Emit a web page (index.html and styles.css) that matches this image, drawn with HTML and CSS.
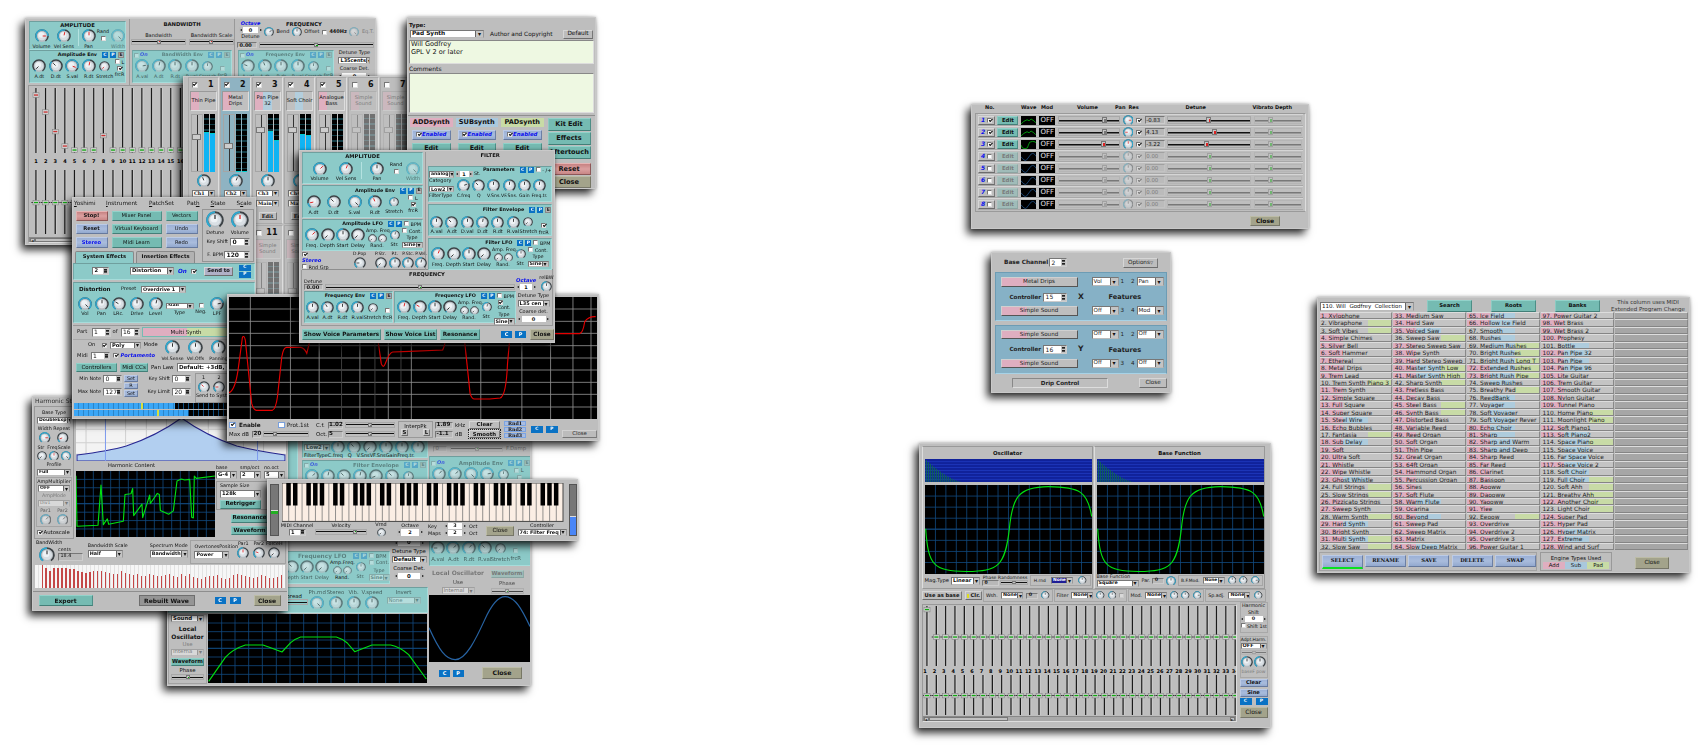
FILE: index.html
```html
<!DOCTYPE html>
<html lang="en">
<head>
<meta charset="utf-8">
<title>Yoshimi</title>
<link rel="stylesheet" href="styles.css">
</head>
<body>
<main class="desktop">

<!-- Part parameters with harmonic sliders -->
<section class="win subsynth">
  <div class="sub-top">
    <div class="sub-amp">
      <div class="teal sub-a1"><b class="h">AMPLITUDE</b>
        <div class="g"><x-k a="90" p="r" t="Volume"></x-k><x-k a="10" p="r" t="Vel Sens"></x-k><i class="vline"></i><x-k a="0" p="r" t="Pan"></x-k><span class="stack">Rand<i class="chk"></i></span><x-k a="135" off t="Width"></x-k></div>
      </div>
      <div class="teal sub-env"><div class="hd"><b>Amplitude Env</b><i class="cp">C</i><i class="cp">P</i><i class="cp e">E</i></div>
        <div class="g"><x-k a="-135" t="A.dt"></x-k><x-k a="-45" t="D.dt"></x-k><x-k a="110" p="r" t="S.val"></x-k><x-k a="10" p="r" t="R.dt"></x-k><x-k class="sm" a="-135" p="r" t="Stretch"></x-k><span class="stack end"><span><i class="chk"></i> L</span><i class="chk on"></i>frcR</span></div>
      </div>
    </div>
    <div class="sub-bw"><b class="h">BANDWIDTH</b>
      <div class="bw-sl"><span>Bandwidth<x-s v="50" c="red"></x-s></span><span>Bandwidth Scale<x-s v="48" c="red"></x-s></span></div>
      <div class="teal sub-env dis"><div class="hd"><span class="on"><i class="chk"></i>On</span><b>BandWidth Env</b><i class="cp">C</i><i class="cp">P</i><i class="cp e">E</i></div>
        <div class="g"><x-k a="80" t="A.val"></x-k><x-k a="10" t="A.dt"></x-k><x-k a="0" t="R.dt"></x-k><x-k a="0" t="R.val"></x-k><x-k class="sm" a="0" t="Stretch"></x-k><span class="stack end low"><i class="chk"></i>frcR</span></div>
      </div>
    </div>
    <div class="sub-fr">
      <div class="fr1"><span class="oct"><em>Octave</em><span class="lr">0</span><span>Detune</span></span><span class="frr"><b>FREQUENCY</b><span class="frk"><x-k class="sm" a="60"></x-k>Bend<x-k class="sm" a="0"></x-k>Offset<i class="chk"></i><b>440Hz</b><x-k class="sm" off a="135"></x-k><span class="faint">Eq.T.</span></span></span></div>
      <div class="fr2"><b class="inp">0.00</b><x-s v="50" c="green"></x-s></div>
      <div class="fr3"><div class="teal sub-env dis"><div class="hd"><span class="on"><i class="chk"></i>On</span><b>Frequency Env</b><i class="cp">C</i><i class="cp">P</i><i class="cp e">E</i></div>
        <div class="g"><x-k a="-70" t="A.val"></x-k><x-k a="-20" t="A.dt"></x-k><x-k a="0" t="R.dt"></x-k><x-k a="0" t="R.val"></x-k><x-k class="sm" a="0" t="Stretch"></x-k><span class="stack end low"><i class="chk"></i>frcR</span></div>
      </div><div class="det"><span>Detune Type</span><b class="sel">L35cents</b><span>Coarse Det.</span><span class="lr">0</span></div></div>
    </div>
  </div>
  <x-harm n="16" sub></x-harm>
</section>

<!-- Mixer -->
<section class="win mixer"><x-mixer></x-mixer></section>

<!-- Instrument edit -->
<section class="win kit">
  <div class="kit-a"><b>Type:</b>
    <div class="kit-t"><b class="sel">Pad Synth</b><span>Author and Copyright</span><span class="btn">Default</span></div>
    <div class="area a1">Will Godfrey<br>GPL V 2 or later</div>
    <span class="cm">Comments</span>
    <div class="area a2"></div>
  </div>
  <div class="kit-b">
    <div class="eng"><b class="chip pink">ADDsynth</b><em class="btn blue"><i class="chk on"></i> Enabled</em><b class="btn tl">Edit</b></div>
    <div class="eng"><b class="chip sky">SUBsynth</b><em class="btn blue"><i class="chk on"></i> Enabled</em><b class="btn tl">Edit</b></div>
    <div class="eng"><b class="chip lime">PADsynth</b><em class="btn blue"><i class="chk on"></i> Enabled</em><b class="btn tl">Edit</b></div>
    <div class="kit-c"><b class="btn tl">Kit Edit</b><b class="btn tl">Effects</b><b class="btn tl">Aftertouch</b><b class="btn red">Reset</b><b class="btn cl">Close</b></div>
  </div>
</section>

<!-- Voice parameters -->
<section class="win voice">
  <div class="vo-l">
    <div class="vo-f1 dis"><div class="teal vo-a"></div>
      <div class="vo-f"><div class="teal vp"><b class="sel">Low2</b><div class="ks"><x-k a="0"></x-k><x-k a="-45"></x-k><x-k a="-135"></x-k><x-k a="0"></x-k><x-k a="0"></x-k><x-k a="0"></x-k></div><p>FilterTypeC.freq&nbsp;&nbsp; Q&nbsp;&nbsp; V.SnsVF.SnsGainFreq.tr.</p></div>
      <div class="teal ve"><div class="hd"><span class="on"><i class="chk"></i>On</span><b>Filter Envelope</b><i class="cp">C</i><i class="cp">P</i><i class="cp e">E</i></div><div class="ks"><x-k a="50"></x-k><x-k a="10"></x-k><x-k a="-45"></x-k><x-k a="10"></x-k><x-k a="-110"></x-k><x-k a="-45"></x-k><x-k class="sm" a="0"></x-k></div></div></div>
    </div>
    <div class="vo-f2"><div class="teal vl dis"><div class="hd"><b>Frequency LFO</b><i class="cp">C</i><i class="cp">P</i><span><i class="chk"></i> BPM<br><i class="chk"></i> Cont.</span></div><div class="ks"><x-k a="-45" t="Depth"></x-k><x-k a="-135" t="Start"></x-k><x-k a="-135" t="Delay"></x-k><span class="rand">Amp.Freq.<span><x-k class="sm" a="-135"></x-k><x-k class="sm" a="-135"></x-k></span>Rand.</span><x-k class="sm" a="0" t="Str."></x-k><span class="stack vty">Type<b class="sel">Sine</b></span></div></div>
      <div class="vt"><span class="lr">0</span><span>Detune Type</span><b class="sel">Default</b><span>Coarse Det.</span><span class="lr">0</span></div></div>
    <div class="teal unis dis"><span class="spread">Spread<x-s v="0"></x-s></span><x-k up a="135" t="Ph.rnd"></x-k><x-k up a="0" t="Stereo"></x-k><x-k up a="0" t="Vib."></x-k><x-k up a="0" t="V.speed"></x-k><span class="stack">Invert<span class="sel">None</span></span></div>
    <div class="vo-b"><div class="vo-lo"><b class="sel">Sound</b><b class="lo">Local<br>Oscillator</b><span class="faint">Use</span><span class="sel faint">Interna</span><b class="btn tl">Waveform</b><span>Phase</span><x-s v="50" c="green"></x-s></div>
      <svg class="scope" viewBox="0 0 657 207" preserveAspectRatio="none"><path class="grid" d="M0 27H657M0 53H657M0 78H657M0 103H657M0 103H657M0 129H657M0 155H657M0 181H657M41 0V207M81 0V207M122 0V207M163 0V207M205 0V207M246 0V207M287 0V207M328 0V207M369 0V207M410 0V207M451 0V207M492 0V207M533 0V207M574 0V207M615 0V207"/><path class="green" d="M2 202L52 130Q75 105 112 93H165L190 102L222 114L248 86Q262 74 278 69H385Q405 75 418 87L440 113L492 93H548Q575 98 602 122L655 195"/></svg></div>
  </div>
  <div class="vo-r">
    <div class="vr0"><span class="inp">0</span><x-s v="50" c="green"></x-s><span>V.Sns</span><span class="inp">0</span><x-s v="50" c="green"></x-s><span>F.Damp</span></div>
    <div class="teal vr1 dis"><div class="hd"><span class="on"><i class="chk"></i>On</span><b>Amplitude Env</b><i class="cp">C</i><i class="cp">P</i><i class="cp e">E</i></div><div class="ks"><x-k a="40"></x-k><x-k a="50"></x-k><x-k a="135"></x-k><x-k a="80"></x-k><x-k class="sm" a="0"></x-k><span class="stack"><span><i class="chk"></i> L</span><i class="chk"></i></span></div></div>
    <div class="teal vr2 dis"><div class="ks"><x-k a="-90" t="A.val"></x-k><x-k a="50" t="A.dt"></x-k><x-k a="40" t="R.dt"></x-k><x-k a="-45" t="R.val"></x-k><x-k class="sm" a="-135" t="Stretch"></x-k><span class="stack end low"><i class="chk"></i>frcR</span></div></div>
    <div class="vr3 dis"><span><b>Local Oscillator</b><span>Use</span><span class="sel">Internal</span></span><span><b class="btn tl">Waveform</b><span>Phase</span><x-s v="50" c="green"></x-s></span></div>
    <svg class="scope" viewBox="0 0 300 200" preserveAspectRatio="none"><path class="wave" d="M0 98C30 165 50 193 78 193C110 193 140 130 165 75C185 30 205 5 226 5C255 5 275 40 300 94"/></svg>
    <div class="vr4"><i class="cp">C</i><i class="cp">P</i><b class="btn cl">Close</b></div>
  </div>
</section>

<!-- Harmonic structure -->
<section class="win pad">
  <div class="pad-title">Harmonic Structure</div>
  <div class="pad-top">
    <div class="pad-l">
      <span>Base Type</span><b class="sel">DoubleExp</b><span class="gap">Width Repeat</span><div class="ks2"><x-k a="90" p="r"></x-k><x-k a="-110" p="r"></x-k></div>
      <span>Str&nbsp; FreqScale</span><div class="ks3"><x-k a="-135"></x-k><x-k a="0" p="r"></x-k><x-k a="135"></x-k></div><span>Profile</span><b class="sel">Full</b>
      <div class="pad-am"><span>AmpMultiplier</span><b class="sel">OFF</b><span class="faint">AmpMode</span><span class="sel faint">Div1</span><div class="ks2 dis"><x-k a="40" t="Par1" up></x-k><x-k a="40" t="Par2" up></x-k></div></div>
      <span class="asc"><i class="chk on"></i>Autoscale</span>
    </div>
    <div class="pad-r">
      <svg class="prof" viewBox="0 0 627 165" preserveAspectRatio="none"><path class="bg" d="M0 0H627V165H0Z"/><path class="gl" d="M30 0V165M88 0V165M148 0V165M210 0V165M270 0V165M332 0V165M395 0V165M458 0V165M500 0V165M560 0V165M0 70H627M0 110H627M0 145H627"/><path class="fill" d="M3 165V147Q100 135 150 120Q240 90 315 36Q390 90 480 120Q540 135 624 147V165Z"/><path class="mk" d="M88 0V165M542 0V165"/></svg>
      <div class="pad-mid">
        <div class="pad-hc"><span>Harmonic Content</span>
          <svg class="scope" viewBox="0 0 417 197" preserveAspectRatio="none"><path class="grid" d="M0 25H417M0 50H417M0 75H417M0 97H417M0 98H417M0 123H417M0 148H417M0 173H417M26 0V197M52 0V197M78 0V197M104 0V197M130 0V197M157 0V197M183 0V197M209 0V197M235 0V197M261 0V197M287 0V197M313 0V197M339 0V197M365 0V197M391 0V197"/><path class="green" d="M0 14L3 165L66 162L75 42L82 160L94 143L98 159L142 150L147 70L165 68L170 52L173 133L198 99L200 139L221 72L223 97L244 67L250 70L253 118L278 129L292 119L303 30L316 24L326 27L341 25L347 138L352 140L355 15L361 22L417 15"/></svg></div>
        <div class="pad-c"><div class="sel3"><span>base<b class="sel">G-4</b></span><span>smp/oct<b class="sel">2</b></span><span>no.oct<b class="sel">5</b></span></div>
          <div class="samp"><span>Sample Size</span><b class="sel">128k</b><b class="btn tl">Retrigger</b></div>
          <b class="btn tl rw">Resonance</b><b class="btn tl rw">Waveform</b></div>
      </div>
    </div>
  </div>
  <div class="pad-bw"><span class="bwk">BandWidth<x-k a="0"></x-k></span><span class="cents">cents<span class="inp">18.4</span></span><span class="fld">Bandwidth Scale<b class="sel">Half</b></span><span class="fld sp">Spectrum Mode<b class="sel">Bandwidth</b></span><div class="over"><span class="fld">OvertonesPosition<b class="sel">Power</b></span><x-k up a="0" p="r" t="Par1"></x-k><x-k up a="-70" p="r" t="Par2"></x-k><x-k up a="-135" t="ForceH"></x-k></div></div>
  <x-bars></x-bars>
  <div class="pad-foot"><b class="btn tl">Export</b><b class="btn dk">Rebuilt Wave</b><i class="cp">C</i><i class="cp">P</i><b class="btn cl">Close</b></div>
</section>

<!-- Main window -->
<section class="win mainw">
  <nav class="menu"><span><u>Y</u>oshimi</span><span><u>I</u>nstrument</span><span><u>P</u>atchSet</span><span>Pat<u>h</u></span><span><u>S</u>tate</span><span>S<u>c</u>ale</span></nav>
  <div class="mw-top">
    <div class="mw-left">
      <div class="btn9"><b class="btn red">Stop!</b><span class="btn tl">Mixer Panel</span><span class="btn tl">Vectors</span><b class="btn blue">Reset</b><span class="btn tl">Virtual Keyboard</span><span class="btn blue">Undo</span><b class="btn blue link">Stereo</b><span class="btn tl">Midi Learn</span><span class="btn blue">Redo</span></div>
      <div class="tabs"><b class="tab teal">System Effects</b><b class="tab">Insertion Effects</b></div>
    </div>
    <div class="mw-vol"><div class="ks"><x-k a="0" t="Detune"></x-k><x-k a="0" p="r" t="Volume"></x-k></div><div class="rw1"><span>Key Shift</span><b class="spin">0</b></div><div class="rw2"><span>F. BPM</span><b class="spin">120</b></div></div>
  </div>
  <div class="teal fx1"><b class="spin">2</b><b class="sel">Distortion</b><em>On</em><i class="chk on"></i><b class="btn lil">Send to</b><span class="cps"><i class="cp">C</i><i class="cp">P</i></span></div>
  <div class="teal fx2"><div class="fx2h"><b>Distortion</b><span>Preset</span><b class="sel">Overdrive 1</b></div>
    <div class="g"><x-k a="135" t="Vol"></x-k><x-k a="0" t="Pan"></x-k><x-k a="-60" t="LRc."></x-k><x-k a="0" t="Drive"></x-k><x-k a="10" t="Level"></x-k><span class="stack low"><b class="sel">Atan</b>Type</span><span class="stack low"><i class="chk"></i>Neg.</span><x-k a="80" t="LPF"></x-k></div></div>
  <div class="part1"><span>Part</span><span class="spin">1</span><span>of</span><span class="spin">16</span><span class="name">Multi Synth</span></div>
  <div class="part2"><div class="p2l"><div class="p2a"><span>On</span><i class="chk on"></i><b class="sel">Poly</b><span>Mode</span></div><div class="p2b"><span>Midi</span><span class="spin">1</span><i class="chk on"></i><em>Portamento</em></div></div><div class="ks"><x-k a="0" t="Vel.Sense"></x-k><x-k a="0" t="Vel.Offs"></x-k><x-k a="0" t="Panning"></x-k></div></div>
  <div class="part3"><span class="btn tl">Controllers</span><span class="btn tl">Midi CCs</span><span>Pan Law</span><b class="sel">Default: +3dB, Centre</b></div>
  <div class="part4"><div class="p4a"><span>Min Note</span><span class="spin">0</span><span>Max Note</span><span class="spin">127</span></div><div class="p4b"><span class="btn blue">Set</span><span class="btn blue">R</span><span class="btn blue">Set</span></div><div class="p4a"><span>Key Shift</span><span class="spin">0</span><span>Key Limit</span><span class="spin">20</span></div><div class="p4c"><div class="ks"><x-k up a="-45" p="r" t="1"></x-k><x-k up a="-90" p="r" t="2"></x-k><x-k up a="-45" p="r" t="3"></x-k></div><span>Send to System</span></div></div>
  <div class="vu v1"><i></i></div><div class="vu v2"><i></i></div>
</section>

<!-- Resonance -->
<section class="win reso">
  <svg class="rg" viewBox="0 0 1102 366" preserveAspectRatio="none"><path d="M0 0H1102V366H0Z"/><path class="wl" d="M0 36H1102M0 73H1102M0 109H1102M0 146H1102M0 183H1102M0 219H1102M0 256H1102M0 292H1102M0 330H1102M64 0V366M184 0V366M270 0V366M392 0V366M477 0V366M546 0V366M754 0V366M877 0V366M963 0V366M1030 0V366M1084 0V366"/><path class="wl dim" d="M337 0V366M437 0V366M515 0V366"/><path class="rd" d="M0 287Q18 280 27 220L40 122Q45 112 49 130L68 320Q74 340 82 340H130Q140 336 145 300L158 180Q163 150 173 151H215Q226 153 233 169L240 140V100H442L456 200Q462 216 468 200Q480 167 490 165L540 163L640 159Q650 140 655 80H700L722 290Q727 306 735 306H781L812 303Q830 296 834 200L842 110H1050Q1060 108 1065 75Q1075 58 1098 59"/></svg>
  <div class="rc">
    <div class="rc1"><div><i class="chk on bl"></i><b>Enable</b><i class="chk bl"></i><span>Prot.1st</span></div><div><span>Max dB</span><b class="inp">20</b><x-s v="25"></x-s></div></div>
    <div class="rc2"><div><span>C.f.</span><b class="inp">1.02</b><x-s v="50"></x-s></div><div><span>Oct.</span><b class="inp">5</b><x-s v="50"></x-s></div></div>
    <div class="rc3"><span>InterpPk</span><div><b class="btn">S</b><b class="btn">L</b></div></div>
    <div class="rc4"><b class="inp">1.89</b><span>kHz</span><b class="inp">-1.1</b><span>dB</span></div>
    <div class="rc5"><b class="btn">Clear</b><b class="btn foc">Smooth</b></div>
    <div class="rc6"><b class="btn">Rnd1</b><b class="btn">Rnd2</b><b class="btn">Rnd3</b></div>
    <i class="cp">C</i><i class="cp">P</i><span class="btn rcl">Close</span>
  </div>
</section>

<!-- ADD synth -->
<section class="win add">
  <div class="ad-top">
    <div class="ad-l">
      <div class="teal ad1"><b class="h">AMPLITUDE</b><div class="g"><x-k a="45" p="r" t="Volume"></x-k><x-k a="20" p="r" t="Vel Sens"></x-k><i class="vline"></i><x-k a="0" t="Pan"></x-k><span class="stack">Rand<i class="chk"></i></span><x-k off a="135" t="Width"></x-k></div></div>
      <div class="teal ad2"><div class="hd"><b>Amplitude Env</b><i class="cp">C</i><i class="cp">P</i><i class="cp e">E</i></div><div class="g"><x-k a="-100" p="r" t="A.dt"></x-k><x-k a="-45" t="D.dt"></x-k><x-k a="135" t="S.val"></x-k><x-k a="-20" p="r" t="R.dt"></x-k><x-k class="sm" a="0" t="Stretch"></x-k><span class="stack end"><span><i class="chk"></i> L</span><i class="chk on"></i>frcR</span></div></div>
      <div class="teal ad3"><div class="hd"><b>Amplitude LFO</b><i class="cp">C</i><i class="cp">P</i><span class="bc"><i class="chk"></i> BPM</span></div><div class="g"><x-k a="45" p="r" t="Freq."></x-k><x-k a="-135" t="Depth"></x-k><x-k a="0" t="Start"></x-k><x-k a="-135" t="Delay"></x-k><span class="rand">Amp. Freq.<span><x-k class="sm" a="-135"></x-k><x-k class="sm" a="-135"></x-k></span>Rand.</span><x-k class="sm" a="10" t="Str."></x-k><span class="ty"><span><i class="chk"></i> Cont.</span>Type<b class="sel">Sine</b></span></div></div>
      <div class="ad4"><div class="st"><span><i class="chk on"></i> <em>Stereo</em></span><span><i class="chk"></i> Rnd Grp</span></div><div class="g"><x-k up a="-90" t="D.Pop"></x-k><x-k up a="-135" t="P.Str."></x-k><x-k up a="0" t="P.t."></x-k><x-k up a="0" t="P.Stc."></x-k><x-k up a="10" t="P.Vel."></x-k></div></div>
    </div>
    <div class="ad-r"><b class="h">FILTER</b>
      <div class="teal af1"><div class="hd"><b>Parameters</b><i class="cp">C</i><i class="cp">P</i><span><i class="chk"></i> - /+</span></div><div class="af1b"><div class="afs"><span><b class="sel">analog</b><span class="lr">1</span>St.</span><span>Category</span><b class="sel low2">Low2</b><span>FilterType</span></div><div class="ks"><x-k a="70" t="C.freq"></x-k><x-k a="-45" t="Q"></x-k><x-k a="0" t="V.Sns."></x-k><x-k a="0" t="VF.Sns."></x-k><x-k a="0" t="Gain"></x-k><x-k a="0" t="Freq.tr."></x-k></div></div></div>
      <div class="teal af2"><div class="hd"><b>Filter Envelope</b><i class="cp">C</i><i class="cp">P</i><i class="cp e">E</i></div><div class="ks"><x-k a="0" t="A.val"></x-k><x-k a="-45" t="A.dt"></x-k><x-k a="0" t="D.val"></x-k><x-k a="10" t="D.dt"></x-k><x-k a="0" t="R.dt"></x-k><x-k a="0" t="R.val"></x-k><x-k class="sm" a="-135" t="Stretch"></x-k><span class="stack end low"><i class="chk on"></i>frcR</span></div></div>
      <div class="teal ad3 af3"><div class="hd"><b>Filter LFO</b><i class="cp">C</i><i class="cp">P</i><span class="bc"><i class="chk"></i> BPM</span></div><div class="g"><x-k a="20" p="r" t="Freq."></x-k><x-k a="-135" t="Depth"></x-k><x-k a="0" t="Start"></x-k><x-k a="-135" t="Delay"></x-k><span class="rand">Amp. Freq.<span><x-k class="sm" a="-135"></x-k><x-k class="sm" a="-135"></x-k></span>Rand.</span><x-k class="sm" a="0" t="Str."></x-k><span class="ty"><span><i class="chk"></i> Cont.</span>Type<b class="sel">Sine</b></span></div></div>
    </div>
  </div>
  <div class="ad-fr"><b class="h">FREQUENCY</b>
    <div class="adf1"><span>Detune<b class="inp">0.00</b></span><x-s v="50" c="green"></x-s><span class="oc"><em>Octave</em><span class="lr">1</span></span><x-k up a="0" t="relBW"></x-k></div>
    <div class="adf2"><div class="teal ff1"><div class="hd"><b>Frequency Env</b><i class="cp">C</i><i class="cp">P</i><i class="cp e">E</i></div><div class="ks"><x-k a="0" t="A.val"></x-k><x-k a="-30" t="A.dt"></x-k><x-k a="0" t="R.dt"></x-k><x-k a="0" t="R.val"></x-k><x-k class="sm" a="-135" t="Stretch"></x-k><span class="stack end low"><i class="chk"></i>frcR</span></div></div>
      <div class="teal ad3 ff2"><div class="hd"><b>Frequency LFO</b><i class="cp">C</i><i class="cp">P</i><span class="bc"><i class="chk"></i> BPM</span></div><div class="g"><x-k a="10" p="r" t="Freq."></x-k><x-k a="-60" p="r" t="Depth"></x-k><x-k a="0" t="Start"></x-k><x-k a="-135" t="Delay"></x-k><span class="rand">Amp. Freq.<span><x-k class="sm" a="-135"></x-k><x-k class="sm" a="-135"></x-k></span>Rand.</span><x-k class="sm" a="10" t="Str."></x-k><span class="ty"><span><i class="chk on"></i> Cont.</span>Type<b class="sel">Sine</b></span></div></div>
      <div class="det"><span>Detune Type</span><b class="sel">L35 cen</b><span>Coarse det.</span><span class="lr">0</span></div></div>
  </div>
  <div class="ad-ft"><b class="btn tl">Show Voice Parameters</b><b class="btn tl">Show Voice List</b><b class="btn tl">Resonance</b><i class="cp">C</i><i class="cp">P</i><b class="btn cl">Close</b></div>
</section>

<!-- Virtual keyboard -->
<section class="win vkb">
  <div class="vside"><i></i></div>
  <div class="vmid"><x-piano></x-piano>
    <div class="vctl"><span class="mc">MIDI Channel<b class="spin">1</b></span><span class="ve1">Velocity<x-s v="77" c="green"></x-s></span><x-k up a="-135" t="Vrnd"></x-k><span class="mc">Octave<b class="lr">2</b></span><span class="km">Key<br>Maps</span><span class="ko"><b class="lr">3</b><b class="lr">2</b></span><span class="km">Oct<br>Oct</span><b class="btn cl">Close</b><span class="mc">Controller<b class="sel">74: Filter Freq</b></span></div>
  </div>
  <div class="vside bl"><i></i></div>
</section>

<!-- Voice list -->
<section class="win vlist">
  <div class="vh"><b>No.</b><b>Wave</b><b>Mod</b><b>Volume</b><b>Pan</b><b>Res</b><b>Detune</b><b>Vibrato Depth</b></div>
  <x-voices></x-voices>
  <div class="vfoot"><b class="btn cl">Close</b></div>
</section>

<!-- Vector control -->
<section class="win vect">
  <div class="vc0"><b>Base Channel</b><span class="spin">2</span><span class="btn">Options <small>▽</small></span></div>
  <div class="vbox"><span class="nm">Metal Drips</span><div class="fs"><span class="sel">Vol</span>1<i></i>2<span class="sel">Pan</span></div>
    <div class="cn"><b>Controller</b><span class="spin">15</span><b class="xy">X</b></div><b class="ft">Features</b>
    <span class="nm">Simple Sound</span><div class="fs"><span class="sel">Off</span>3<i></i>4<span class="sel">Mod</span></div></div>
  <div class="vbox"><span class="nm">Simple Sound</span><div class="fs"><span class="sel">Off</span>1<i></i>2<span class="sel">Off</span></div>
    <div class="cn"><b>Controller</b><span class="spin">16</span><b class="xy">Y</b></div><b class="ft">Features</b>
    <span class="nm">Simple Sound</span><div class="fs"><span class="sel">Off</span>3<i></i>4<span class="sel">Off</span></div></div>
  <div class="vcf"><b>Drip Control</b><span class="btn">Close</span></div>
</section>

<!-- Instrument bank -->
<section class="win bank">
  <div class="bk0"><span class="sel">110. Will&nbsp; Godfrey&nbsp; Collection</span><b class="btn tl">Search</b><b class="btn tl">Roots</b><b class="btn tl">Banks</b><span>This column uses MIDI<br>Extended Program Change</span></div>
  <x-bank></x-bank>
  <div class="bkf"><div class="bkb"><b class="btn blue sel1">SELECT</b><b class="btn blue">RENAME</b><b class="btn blue">SAVE</b><b class="btn blue">DELETE</b><b class="btn blue">SWAP</b></div><div class="bke"><span>Engine Types Used</span><div><i>Add</i><i>Sub</i><i>Pad</i></div></div><span class="btn cl">Close</span></div>
</section>

<!-- Oscillator -->
<section class="win osc">
  <div class="os1">
    <div class="osp"><b>Oscillator</b><x-spec></x-spec><x-osc></x-osc>
      <div class="oc1"><span>Mag.Type</span><b class="sel">Linear</b><span class="ph"><span>Phase Randomness</span><span class="phr"><b class="inp">0</b><x-s v="50" c="green"></x-s></span></span><span class="ob">H.rnd <b class="sel hot">None</b><x-k a="0"></x-k></span></div></div>
    <div class="osp"><b>Base Function</b><x-spec></x-spec><x-osc></x-osc>
      <div class="oc2"><span class="bf">Base Function<b class="sel">Square</b></span><span>Par.</span><b class="inp">0</b><x-k a="0" full></x-k><span class="ob">B.F.Mod. <b class="sel">None</b><x-k a="0"></x-k><x-k a="0"></x-k><x-k a="90"></x-k></span></div></div>
  </div>
  <div class="os2"><b class="btn">Use as base</b><b class="btn"><i class="yl"></i>Clr.</b><span class="ob">Wsh.<b class="sel">None</b><b class="inp">0</b><x-k a="0"></x-k></span><span class="ob">Filter<b class="sel">None</b><x-k a="0"></x-k><x-k a="0"></x-k><i class="chk faint"></i></span><span class="ob">Mod.<b class="sel">None</b><x-k a="0"></x-k><x-k a="0"></x-k><x-k a="90"></x-k></span><span class="ob">Sp.adj.<b class="sel">None</b><x-k a="0"></x-k></span></div>
  <div class="os3"><x-harm n="34"></x-harm>
    <div class="osr"><div class="hs"><span>Harmonic</span><span>Shift</span><span class="lr">0</span><span><i class="chk"></i> Shift 1st</span></div><div class="ah"><span>Adpt.Harm.</span><b class="sel">OFF</b><x-s class="faint" v="50" c="green"></x-s><div class="ks2"><x-k a="0"></x-k><x-k a="0"></x-k></div><span class="faint">baseF pow</span></div><b class="btn blue">Clear</b><b class="btn blue">Sine</b><div class="cpr"><i class="cp">C</i><i class="cp">P</i></div><span class="btn cl">Close</span></div></div>
</section>

</main>
<script src="script.js"></script>
</body>
</html>
```
FILE: styles.css
```css
*{box-sizing:border-box}
body{margin:0;background:#fff;font-family:"DejaVu Sans",sans-serif}
.desktop{position:relative;width:1705px;height:753px;overflow:hidden}
.win{position:absolute;background:#bebebe;box-shadow:-4px 5px 8px rgba(0,0,0,.8),0 0 3px rgba(0,0,0,.3);font-size:5px;line-height:1.15;white-space:nowrap;overflow:hidden;color:#111;border:1px solid #c9c9c9}
.subsynth{left:25px;top:18px;width:351px;height:227px}
.mixer{left:183px;top:76px;width:236px;height:330px}
.kit{left:407px;top:17px;width:189px;height:172px}
.voice{left:167px;top:410px;width:364px;height:276px}
.pad{left:32px;top:396px;width:256px;height:215px}
.mainw{left:72px;top:197px;width:184px;height:222px}
.reso{left:227px;top:294px;width:372px;height:147px}
.add{left:299px;top:150px;width:256px;height:193px}
.vkb{left:267px;top:479px;width:311px;height:62px}
.vlist{left:971px;top:104px;width:338px;height:125px}
.vect{left:991px;top:252px;width:180px;height:141px}
.bank{left:1317px;top:297px;width:373px;height:276px}
.osc{left:919px;top:443px;width:352px;height:285px}

/* shared controls */
i{font-style:normal}
em{color:#0a10ee;font-weight:bold}
.teal{background:#8ccac8;border:1px solid #a6dcda;border-top-color:#6f9f9e;border-left-color:#74a9a8}
.h{display:block;text-align:center;line-height:7px;font-size:5.3px}
.dis x-k,.dis .hd,.dis .sel,.dis>p,.dis b,.dis .chk,.dis .stack{opacity:.6}
.dis .hd b,.dis .hd .cp{opacity:.65}
.faint{opacity:.4}
.g{display:grid;align-items:start}
.ks{display:grid;grid-auto-flow:column;grid-auto-columns:var(--p,16px)}
.ks2,.ks3{display:flex;justify-content:space-around}
.hd{display:flex;align-items:center;gap:2px;height:8px}
.hd b{margin-left:auto;margin-right:3px}
x-k{display:flex;flex-direction:column;align-items:center;gap:.5px;min-width:0;--s:var(--k,14px)}
x-k.sm{--s:var(--ks,11px);padding-top:1.5px}
x-k.sm svg{margin-bottom:1.5px}
x-k svg{width:var(--s);height:var(--s);display:block;flex:none}
x-k[off]{opacity:.45}
.stack{display:flex;flex-direction:column;align-items:center;gap:1.5px}
.end{padding-top:0;gap:1px}
.end.low{padding-top:7px;gap:2px}
.chk{display:inline-block;width:5px;height:5px;background:#fff;border:1px solid #777;border-right-color:#ddd;border-bottom-color:#ddd;position:relative;vertical-align:-.5px;flex:none}
.chk.on::after{content:"";position:absolute;left:.5px;top:0;width:2.5px;height:1.2px;border-left:1px solid #111;border-bottom:1px solid #111;transform:rotate(-45deg)}
.chk.bl{border:1px solid #79a0dc;width:6.5px;height:6.5px}
.vline{width:1px;height:17px;background:#6fa3a2;border-right:.5px solid #b4e2e0;justify-self:center}
.cp{display:flex;align-items:center;justify-content:center;width:6px;height:6px;background:#0a72c4;color:#fff;font-weight:bold;font-size:4.5px;line-height:1;flex:none}
.cp.e{background:#b4b4b4;color:#222;border:.5px solid #888}
.btn{display:flex;align-items:center;justify-content:center;background:#bdbdbd;border:1px solid #d6d6d6;border-right-color:#777;border-bottom-color:#6c6c6c;line-height:1;min-width:0}
.btn.tl{background:#75bbb2;border-color:#93d2ca #4d8e86 #437f78 #8bcac2}
.btn.blue{background:linear-gradient(#9bb0d6,#a9bcdc 50%,#93a9cf);border-color:#bccbe6 #6b7fa5 #66799d #bccbe6}
.btn.red{background:linear-gradient(#c78282,#dba0a0,#c98686);border-color:#e5b5b5 #8d5858 #8d5858 #e0b0b0}
.btn.cl{background:#a3a38b;border-color:#bcbca6 #777765 #77776a #bcbca6}
.btn.dk{background:#959595;border-color:#6e6e6e}
.btn.lil{background:#b0b0c6}
.btn.link{color:#0a10ee}
.sel{display:flex;align-items:center;background:#fff;border:1px solid #777;border-right-color:#999;border-bottom-color:#bbb;height:7px;padding-left:1px;line-height:1;overflow:hidden;min-width:0;flex:none}
.sel::after{content:"▾";margin-left:auto;width:5px;align-self:stretch;flex:none;background:#c4c4c4;border-left:.7px solid #666;display:flex;align-items:center;justify-content:center;font-size:6px;line-height:0;color:#111}
.spin,.inp{display:flex;align-items:center;background:#fff;border:1px solid #777;height:8px;padding-left:1.5px;line-height:1;border-right-color:#ccc;border-bottom-color:#ccc;min-width:0}
.spin{font-size:6px}
.spin::after{content:"";margin-left:auto;width:5px;align-self:stretch;background:linear-gradient(#222,#222) 50% 20%/3px 1.7px no-repeat,linear-gradient(#222,#222) 50% 80%/3px 1.7px no-repeat,#c4c4c4}
.inp{background:#b8b8b8}
.lr{display:flex;align-items:center;justify-content:center;height:6px;background:#fff;border:solid #bbb;border-width:0 4px;line-height:1;position:relative;font-weight:bold}
.lr::before,.lr::after{content:"";position:absolute;left:-3.5px;border:1.6px solid transparent;border-right:2px solid #111;border-left:0}
.lr::after{left:auto;right:-3.5px;border-right:0;border-left:2px solid #111}
x-s{display:block;position:relative;height:6px;min-width:0;background:linear-gradient(#111,#111) 0 50%/100% 1.2px no-repeat;border:.5px solid #a8a8a8}
x-s i{position:absolute;top:0;width:4px;height:100%;margin-left:-2px;background:#c6c6c6;border:.5px solid #777}
x-s i::after{content:"";position:absolute;left:1px;top:.5px;bottom:.5px;width:1.2px;background:var(--c,#777)}
x-s[c=red]{--c:#d22}
x-s[c=green]{--c:#0a0}
.scope{display:block;background:#000}
.scope .grid{stroke:#124a80;stroke-width:2.4;fill:none}
.green{stroke:#00e010;stroke-width:3.4;fill:none;stroke-linejoin:round}
.wave{stroke:#2763a3;stroke-width:3.6;fill:none}
.thin{stroke-width:2}
.rand{text-align:center;line-height:5px}
.rand span{display:flex;justify-content:center;gap:1px}
.rand x-k.sm{--ks:9px;padding:.5px 0 0}
.rand x-k.sm svg{margin:0}

/* harmonic sliders */
x-harm{display:block;overflow:hidden;border:1px solid #999;border-right-color:#ddd;border-bottom-color:#ddd}
x-harm svg{display:block}
x-harm text{font:bold 5px "DejaVu Sans",sans-serif;text-anchor:middle}
.hsb{display:flex;height:6px;background:#a9a9a9;border:.5px solid #888;align-items:stretch;justify-content:space-between}
.hsb i{width:5px;background:#c0c0c0;border:.5px solid #777;font-size:4px;line-height:4px;text-align:center}
.hsb u{flex:0 0 79px;margin-right:auto;background:#c0c0c0;border:.7px solid #777}

/* subsynth */
.sub-top{display:grid;grid-template-columns:104px 105px 1fr;height:66px;font-size:4.8px}
.sub-top>*{border-right:1px solid #999}
.sub-amp{padding:2px 3px 0}
.sub-a1{height:29px}
.sub-a1 .g{grid-template-columns:23px 22px 6px 15px 14px 16px}
.sub-env{height:33px;padding:0 1px}
.sub-env .g{grid-template-columns:16.5px 16.5px 16.5px 16.5px 15.5px 14px}
.sub-bw{padding:2px 1px 0}
.bw-sl{display:grid;grid-template-columns:55px 45px;gap:3px;text-align:center;height:22px;padding-top:5px;font-size:5px}
.sub-bw .sub-env{margin:0 1px}
.on{display:flex;align-items:center;gap:1px;color:#0a10ee;font-style:italic;font-weight:bold;font-size:5px}
.sub-fr{padding:2px 2px 0}
.fr1{display:grid;grid-template-columns:27px 1fr;height:21px}
.oct{display:flex;flex-direction:column;align-items:center;gap:.5px;font-size:5px}
.oct .lr{width:23px}
.frr{display:flex;flex-direction:column}
.frr>b{padding-left:22px;font-size:5.3px}
.frk{display:flex;align-items:center;gap:2.5px;font-size:5px}
.frk x-k.sm{padding:0;--ks:10px}
.frk x-k.sm svg{margin:0}
.fr2{display:grid;grid-template-columns:20px 1fr;gap:2px;height:8px;font-size:5px}
.fr2 .inp{height:6px}
.fr3{display:grid;grid-template-columns:97px 1fr;gap:1px}
.fr3 .sub-env{margin-left:1px}
.det{display:flex;flex-direction:column;align-items:center;gap:1.5px;font-size:5px}
.det .sel,.det .lr{width:32px}
.subsynth x-harm{height:158px;margin:0 2px}

/* mixer */
x-mixer{display:grid;grid-template-columns:repeat(8,32px);grid-template-rows:147px 147px;padding-left:4px;gap:1px 0}
.ch{display:flex;flex-direction:column;align-items:center;width:31px;border:1px solid #aaa;border-right-color:#ddd;padding:1px 1.5px}
.ch.act{background:#8fb3c2}
.ch .ct{display:flex;align-items:center;width:100%;height:12px;font-size:8px;font-weight:bold;padding:0 3px 0 1px;justify-content:space-between;line-height:1}
.ch .chk{width:6.5px;height:6.5px}
.ch .nm{width:27px;height:20px;display:flex;align-items:center;justify-content:center;text-align:center;font-size:5.2px;border:1px solid #999;border-right-color:#ddd;border-bottom-color:#ddd;margin-bottom:3px;white-space:pre;flex:none}
.ch .nm.a{background:linear-gradient(90deg,#dfb0c0 33%,#c0c0c0 33%)}
.ch .nm.as{background:linear-gradient(90deg,#dfb0c0 33%,#b3cedd 33% 66%,#c0c0c0 66%)}
.ch .nm.s{background:linear-gradient(90deg,#c0c0c0 33%,#b3cedd 33% 66%,#c0c0c0 66%)}
.ch .mt{display:grid;grid-template-columns:12px 5px 5px;gap:1px;height:58px;width:26px;margin-bottom:2px}
.ch .fd{position:relative;background:linear-gradient(90deg,transparent 5px,#333 5px 6.4px,transparent 6.4px);border:1px solid #a5a5a5}
.ch .fd i{position:absolute;left:0;width:9px;height:6px;background:#ccc;border:.7px solid #777}
.ch .br{background:repeating-linear-gradient(#000 0 4px,#123c44 4px 5.5px);display:flex;align-items:flex-end}
.ch .br i{width:100%;background:#10b4f4;border-top:1px solid #0cc}
.ch .sel{width:23px;height:6.5px;margin-bottom:3.5px;font-family:"DejaVu Serif",serif;font-weight:bold;font-size:4.8px}
.ch x-k{margin-bottom:2px}
.ch .btn{width:18px;height:8px;font-family:"DejaVu Serif",serif;font-weight:bold;margin-top:2px}
.ch.offc>*:not(.ct){opacity:.4}

/* instrument edit */
.kit-a{height:96px;padding:3.5px 1px 0;font-size:5.5px}
.kit-t{display:grid;grid-template-columns:74px 1fr 30px;gap:6px;height:12.5px;padding:0 1px;align-items:center;font-size:5.8px}
.kit-t .sel{height:8px}
.kit-t .btn{height:9px}
.kit-t .sel::after{width:7px}
.area{background:#eef8e2;border:1px solid #888;border-right-color:#ddd;border-bottom-color:#ddd;font-size:6.6px;line-height:7.4px;padding:0 1px}
.a1{height:24px}
.cm{display:block;font-size:6px;line-height:9px}
.a2{height:40px}
.kit-b{display:grid;grid-template-columns:44.5px 44.5px 44.5px 44px;gap:1px;padding:2px 2px;border-top:1px solid #8f8f8f;font-size:6.6px;margin-top:1px}
.eng{display:flex;flex-direction:column;gap:3px}
.chip{line-height:8.5px;text-align:center;margin-right:2px}
.pink{background:#dfaec0}.sky{background:#aac8dc}.lime{background:#c8dba6}
.eng .btn{height:10.5px;margin:0 4px 0 2px;gap:1px;font-size:5.4px}
.eng .btn.tl{font-size:6.4px}
.kit-c{display:grid;grid-template-rows:12.5px 12.5px 12.5px 14.5px 11.5px;gap:1.6px;padding-left:1px}
.kit-c .red{margin-top:3px}

/* voice */
.voice{display:grid;grid-template-columns:260px 1fr;font-size:5.4px}
.vo-f1{display:grid;grid-template-columns:130px 126px;gap:4px;height:118px;padding-top:13px}
.vo-f{display:flex;flex-direction:column;gap:2px}
.vp{height:34px;display:grid;grid-template-columns:26px 1fr;padding:15px 1px 0;align-content:start}
.vp .ks,.ve .ks{--p:16px;--k:14px}
.vp .sel{margin-top:4px}
.vp p{grid-column:1/3;margin:-1px 0 0;font-size:5px;line-height:5px}
.ve{height:62px;padding:0 1px}
.vo-f2{display:grid;grid-template-columns:222px 36px;gap:1px;height:57px;padding-top:15px}
.vo-f2 .vl{margin-top:7px;height:33px;padding-left:90px;margin-left:10px}
.vl .hd{padding-left:29px;gap:2px}
.vl .hd b{font-size:5.8px;margin:0 auto 0 0}
.vl .hd span{font-size:5px;line-height:6.5px;padding-top:6px}
.vl .ks{grid-template-columns:15px 15px 16px 24px 13px 24px;padding-left:15px;font-size:4.9px}
.vl x-k,.unis x-k{--k:14px;--ks:10px}
.vty{padding-top:8px;gap:.5px}
.vt{display:flex;flex-direction:column;align-items:center;gap:2px;font-size:5.4px;margin-top:-4px}
.vt .sel{width:35px}.vt .lr{width:30px}
.unis{display:grid;grid-template-columns:137px 18.5px 18px 18px 19px 44px;height:26px;margin-top:1px;padding:1px 0 0 2px;align-items:start}
.unis .sel{width:34px}
.spread{padding-top:4px;padding-left:112px}
.vo-b{display:grid;grid-template-columns:39px 1fr;gap:1px;height:72px;margin-top:1px}
.vo-lo{display:flex;flex-direction:column;gap:1px;text-align:center;padding:0 2px;border:1px solid #a2a2a2;height:70px}
.vo-lo .lo{font-size:6px;line-height:7.7px;margin-top:2px}
.vo-lo .btn{height:8.5px;margin-top:1px;flex:none}
.vo-b .scope{width:219px;height:69px}
.vo-r{padding:13px 1px 0 1px}
.vr0{display:grid;grid-template-columns:14px 53px 24px;grid-auto-rows:6px;gap:3.5px 3px;height:34px;padding:12px 2px 0 4px;opacity:.4;align-items:center}
.vr0 .inp{height:6px}
.vr1{height:63px;--p:16px;margin-top:-2px;padding:2px 1px}
.vr2{height:45px;padding-top:19px;--p:15.6px;margin-top:2px}
.vr3{display:grid;grid-template-columns:58px 36px;gap:2px;height:29px;text-align:center;padding-top:4px}
.vr3>span{display:flex;flex-direction:column;gap:2px;align-items:center;opacity:.7}
.vr3 b{font-size:6px}
.vr3 .btn{font-size:5.4px}
.vr3 .sel{width:33px}.vr3 x-s{width:33px}.vr3 .btn{height:8px;width:33px}
.vo-r .scope{width:101px;height:67px}
.vr4{display:flex;gap:2.5px;align-items:center;padding:5px 0 0 10px}
.vr4 .cp,.ad-ft .cp,.pad-foot .cp{width:11px;height:7px;font-size:5px}
.vr4 .btn{width:40px;height:12px;margin-left:16px;font-size:6.2px}

/* pad */
.pad{font-size:4.8px}
.pad-title{font-size:6px;height:9px;padding:1px 2px;color:#333}
.pad-top{display:grid;grid-template-columns:40px 1fr;gap:2px;height:133px;padding-left:1px}
.pad-l{display:flex;flex-direction:column;gap:1px;text-align:center;border:1px solid #999;padding:3px 1px 1px;height:133px;line-height:5.5px}
.pad-l .sel{height:7px;margin:0 1px;font-size:4.6px}
.pad-l .ks2{--k:11.5px}.pad-l .ks3{--k:10px}
.pad-l .gap{margin-top:1px}
.pad-am{border:1px solid #a4a4a4;display:flex;flex-direction:column;gap:1px;padding:1px 0}
.asc{display:flex;align-items:center;gap:1.5px;padding-left:1px;margin-top:2px;font-size:5.4px}
.prof{display:block;width:210px;height:55px}
.prof .bg{fill:#f3f3f3}
.prof .gl{stroke:#d0d0d0;stroke-width:3;fill:none}
.prof .fill{fill:#b2cff0;stroke:#272793;stroke-width:3}
.prof .mk{stroke:#7e9cf0;stroke-width:3}
.pad-mid{display:grid;grid-template-columns:139px 70px;gap:1px}
.pad-hc{text-align:center;font-size:5.2px}
.pad-hc>span{display:block;height:9.5px;padding-right:28px;padding-top:2px}
.pad-hc .scope{width:139px;height:66px}
.pad-c{display:flex;flex-direction:column;gap:3.5px;padding-top:4px;font-size:4.8px}
.sel3{display:grid;grid-template-columns:21px 21px 21px;gap:3px}
.pad-c .sel{height:8px;font-size:5.2px}
.samp{border:1px solid #999;padding:1px 3px;display:flex;flex-direction:column;gap:1.5px;height:29px;flex:none;margin-top:-1px}
.samp .sel,.samp .btn{width:41px;flex:none}
.pad-c .btn{height:9px;font-size:5.6px;flex:none}
.pad-c .rw{width:37px;margin-left:15px}
.pad-bw{display:flex;height:26px;padding:1px 1px 0 3px;font-size:4.8px;align-items:flex-start}
.bwk{width:22px;--k:16px}.bwk x-k{margin-top:1px}
.cents{width:25px;padding-top:7px;margin-right:5px}
.fld{width:35px;padding-top:3px}
.fld .sel{margin-top:1.5px;height:8px}
.sp{margin-left:27px;width:39px;margin-right:2px}
.over{display:grid;grid-template-columns:41px 15.5px 15.5px 15.5px;border:1px solid #a2a2a2;padding:0 3px;--k:12px;width:96px;height:24px}
x-bars{display:flex;height:22.5px;margin:0 2px;background:repeating-linear-gradient(90deg,#f6f6f6 0 2.6px,#e2e2e2 2.6px 4px);align-items:flex-end;padding-left:6.5px;gap:2.8px}
x-bars i{width:1.2px;background:#c44848;flex:none}
.pad-foot{display:flex;align-items:center;border-top:1px solid #8e8e8e;margin-top:3.5px;padding-top:3px;padding-left:5.5px;font-size:6px}
.pad-foot .btn{height:11px}
.pad-foot .tl{width:54px;margin-right:46px}.pad-foot .dk{width:56px;margin-right:20px}
.pad-foot .cp{margin-right:4px}.pad-foot .cl{width:27px;margin-left:9px}

/* main window */
.mainw{font-size:4.9px}
.menu{display:grid;grid-template-columns:32px 43px 38px 23.5px 26px 20px;height:11px;font-size:5.7px;padding:2px 0 0 1px}
.menu u{text-decoration-thickness:.5px}
.mw-top{display:grid;grid-template-columns:128px 1fr;gap:1px;height:53.5px}
.btn9{display:grid;grid-template-columns:32px 50px 32px;gap:3.3px 4px;grid-auto-rows:10.2px;padding:1.5px 0 0 2.5px;height:41.5px;font-size:5.2px}
.tabs{display:flex;gap:2px;padding-left:2px;height:12px;font-size:5.2px}
.tab{width:59px;display:flex;align-items:center;justify-content:center;border:1px solid #888;background:#b2b2b2;border-bottom:0;border-radius:2px 2px 0 0}
.tab.teal{background:#8ccac8}
.mw-vol{border:1px solid #949494;margin:0 1px 2px 0;--k:18px;--p:24.5px;padding-top:1px}
.rw1,.rw2{display:grid;grid-template-columns:25px 20px;gap:2px;height:12px;align-items:center;justify-content:end;text-align:right;padding-right:3px;margin-top:1px}
.rw2{grid-template-columns:20px 26px;gap:1px}
.fx1{display:grid;grid-template-columns:17px 21px 44px 4px 10px 3px 8px 5px 29px 6px 12px;height:17px;align-items:center;padding-left:18px}
.fx1>:nth-child(2){grid-column:3}.fx1>:nth-child(3){grid-column:5}.fx1>:nth-child(4){grid-column:7}.fx1>:nth-child(5){grid-column:9;height:9px}.fx1>:nth-child(6){grid-column:11}
.fx1 .sel{height:8.5px}.fx1 em{font-size:5.6px}
.fx1>b{font-size:5.2px}
.cps{display:grid;gap:1px}.cps .cp{width:12px;height:6px}
.fx2{height:41px;margin-top:2px}
.fx2h{display:grid;grid-template-columns:42px 20px 45px;height:13px;align-items:center;padding-left:5px}
.fx2h>b:first-child{font-size:5.6px}
.fx2 .g{grid-template-columns:16px 17px 17px 20px 17px 31px 12px 20px;padding-left:3px;padding-top:1px}
.fx2 .low{padding-top:6px;gap:1px}.fx2 .low .sel{width:28px;height:6px;font-family:"DejaVu Serif",serif;font-size:4.4px}
.part1{display:grid;grid-template-columns:12.5px 19px 6px 19px 1fr;gap:2px;height:14.5px;align-items:center;padding:0 0 0 4px;border-top:1px solid #999;margin-top:2px;font-size:5.2px}
.part1 .spin{height:9px}
.name{height:10px;border:1px solid #75bbb2;background:linear-gradient(90deg,#dfaec0 40%,#c8dba6 40%);padding-left:28px;line-height:8px;font-size:5.5px}
.part2{display:grid;grid-template-columns:88px 1fr;height:22.5px;border-top:1px solid #a9a9a9;--k:15px;--p:23px;font-size:5.2px}
.p2a,.p2b{display:grid;align-items:center;height:10.5px;grid-template-columns:11px 6px 31px 20px;gap:2.5px;padding-left:15px}
.p2b{grid-template-columns:11px 19px 6px 30px;padding-left:4px}
.p2b .chk{justify-self:end}
.part2 .ks{font-size:4.6px}
.part3{display:grid;grid-template-columns:41px 28px 23px 90px;gap:3px;height:11.5px;align-items:center;padding-left:3px;font-size:5.5px}
.part3 .btn{height:9.5px}.part3 .sel{height:9px}
.part4{display:grid;grid-template-columns:45px 15px 52px 1fr;height:29.5px;gap:1px;padding:2px 0 0 4px}
.p4a{display:grid;grid-template-columns:1fr 19px;gap:5px 2px;align-items:center;text-align:right;align-content:start}
.p4b{display:grid;grid-auto-rows:6.5px;gap:1px;padding:0 0 0 1px}
.p4c{border:1px solid #999;--k:12px;--p:15.3px;margin-left:3px;margin-top:-2px;padding-top:1px}
.vu{height:6.3px;margin:0 0 1px 1px;background:repeating-linear-gradient(90deg,#000 0 4px,#0d4d80 4px 5px)}
.vu i{display:block;height:100%;background:linear-gradient(90deg,transparent 67px,#d8e03c 67px 68.6px,transparent 68.6px),repeating-linear-gradient(90deg,#3aa6f6 0 4.4px,#2c84c6 4.4px 5px);width:101px}
.vu.v2 i{width:114px;background:linear-gradient(90deg,transparent 83px,#d8e03c 83px 84.6px,transparent 84.6px),repeating-linear-gradient(90deg,#3aa6f6 0 4.4px,#2c84c6 4.4px 5px)}

/* resonance */
.rg{display:block;width:368px;height:122px;margin:2px 1px 1px}
.wl{stroke:#8c8c8c;stroke-width:2.6;fill:none}.wl.dim{stroke:#444}
.rd{stroke:#e60000;stroke-width:3.4;fill:none}
.rc{display:flex;align-items:center;height:19px;font-size:5.4px;padding-left:1px}
.rc>*{flex:none}
.rc1>div,.rc2>div{display:grid;align-items:center;height:9px;gap:2px}
.rc1{width:84px}.rc1>div:first-child{grid-template-columns:8px 37px 7px 1fr;font-size:5.7px}.rc1>div+div{grid-template-columns:21px 9px 46px}
.rc2{width:79px;margin:0 3px}.rc2>div{grid-template-columns:9.5px 15px 50px}
.rc .inp{height:7px;font-size:5.6px;padding-left:.5px}
.rc3{width:35px;border:1px solid #999;height:17px;text-align:center;padding-top:1px;margin-right:2px}.rc3>div{display:flex;justify-content:space-between;padding:0 2px}.rc3 .btn{width:7px;height:7px}
.rc4{display:grid;grid-template-columns:18px 13px;gap:2px;width:34px}
.rc5,.rc6{display:grid;gap:1.5px;width:31px;grid-auto-rows:8px;margin-right:4px}
.rc6{width:22px;grid-auto-rows:5.8px;gap:.3px;margin-right:5px;font-size:4.8px}
.rc6 .btn{background:#a9bde0;border-color:#7ba4e4;border-width:.5px 1px;font-family:"DejaVu Serif",serif}
.rc .cp{width:12px;height:6.5px;margin-right:3px}
.rcl{width:35px;height:8px;margin:8px 0 0 1px;opacity:.85}
.foc{outline:.5px dotted #222}

/* add synth */
.add{--k:14px;--ks:10px;font-size:4.9px}
.ad-top{display:grid;grid-template-columns:124px 1fr;height:118px;margin:1px 1px 0 2px;border-bottom:1px solid #8e8e8e}
.ad-l{border-right:1px solid #999;padding-right:2px}
.ad1{height:32px}.ad1 .g{grid-template-columns:29px 24px 6px 26px 12px 22px;padding:1.5px 0 0 2px}
.ad2{height:33px;margin-top:1px;padding-top:.5px}.ad2 .g{grid-template-columns:19px 21px 21px 20px 18px 20px;padding:.5px 0 0 1px}
.ad3{height:32px;margin-top:1px}.ad3 .g{grid-template-columns:16px 15px 15px 16px 22px 13px 22px;padding-left:1px}
.bc{width:18px}
.ad3 .rand{font-size:4.7px}
.ty{display:flex;flex-direction:column;align-items:center;line-height:5.5px;gap:1px}.ty .sel{width:21px;height:6.5px}
.ad4{display:grid;grid-template-columns:44px 1fr;--k:12px}.ad4 .g{grid-template-columns:27px 15px 13.5px 13.5px 12px;margin-right:-4px;font-size:4.5px;line-height:5px}
.st{display:flex;flex-direction:column;padding-top:1px;line-height:6.5px}.st em{font-size:5.2px;line-height:5px}
.ad-r{padding:0 1px 0 2px}
.af1{height:36px;margin-top:7px}.af1b{display:grid;grid-template-columns:27px 1fr}
.afs{display:flex;flex-direction:column;gap:.7px;margin-top:-2px}.afs .sel{width:25px;height:6.5px;font-size:4.6px}.afs>span{display:flex;gap:1.5px;height:6px}.afs .lr{min-width:17px}
.afs .low2{margin-top:1.5px;font-size:4.9px}
.af1 .ks{--p:15.2px;padding-top:6px;--k:13px;font-size:4.6px}.af1 .hd{height:6px}.hd>span{min-width:14px}
.af2{height:32px;margin-top:2px;padding-top:1px}.af2 .ks{--p:15.3px;--k:13px;padding-top:1.5px}
.af3{margin-top:2px}
.ad-fr{border:1px solid #999;border-top:0;margin:0 1px;height:56px;padding:1px 2px 0}
.adf1{display:grid;grid-template-columns:19px 190px 20px 18px;gap:1.5px;height:13px;margin-top:-3px;align-items:end;--k:11px}
.adf1 .inp{height:6px;font-size:5.2px}.oc{text-align:center}
.adf1 em{font-size:5.2px}
.adf1 x-k{margin-bottom:-2px}
.adf2{display:grid;grid-template-columns:89px 122px 1fr;gap:1px;padding-top:3px}
.ff1{height:32px}.ff1 .ks{--p:15px;--k:13px;padding-top:1px}.ff2{margin-top:0}
.adf2 .det{gap:1.5px;padding-top:2px}
.ad-ft{display:flex;align-items:center;gap:3px;padding:3px 2px;font-size:5.7px}
.ad-ft .btn{height:11px;padding:0 1px;flex:none}
.ad-ft .tl:nth-child(1){width:79px}.ad-ft .tl:nth-child(2){width:53px}.ad-ft .tl:nth-child(3){width:40px;margin-right:18px}
.ad-ft .cl{width:24px;margin-left:1px}

/* keyboard */
.vkb{display:grid;grid-template-columns:9px 284px 8px;gap:3px;padding:3px 2px;font-size:5px}
.vside{background:#777;border:1px solid #555;position:relative;height:52px;margin-top:1px}
.vside i{position:absolute;left:0;right:0;top:25px;height:3.5px;background:#22b022;border-top:1px solid #ddd}
.vside.bl i{top:31px;bottom:0;height:auto;background:#4a86f6}
x-piano{display:block;height:38.6px}x-piano svg{display:block}
.vctl{display:grid;grid-template-columns:30px 52px 22px 30px 13px 22px 14px 28px 50px;column-gap:3px;align-items:center;height:15px;--k:9px;font-size:4.9px}
.mc{display:flex;flex-direction:column;align-items:center;gap:.5px}.mc .spin{width:17px;height:7px;font-size:5px}.mc .lr{width:26px;height:7px}.mc .sel{width:49px}
.ve1{text-align:center}.km{line-height:6.6px;padding-top:1px}.ko{display:grid;gap:1px}.ko .lr{height:6px}
.vctl .cl{height:10px;font-weight:normal;font-size:5.6px;margin-top:3px}

/* voice list */
.vh{display:grid;grid-template-columns:36px 20px 36px 38px 13.5px 57px 67px 1fr;height:8px;padding-left:13px;font-size:5px}
x-voices{display:block;border:1px solid #9a9a9a;border-right-color:#ddd;margin:0 2px 0 2.5px;padding:0 2.5px;height:99px}
.vr{display:grid;grid-template-columns:17px 21px 16px 16px 62px 12px 6px 20px 84px 48px;column-gap:2.4px;height:12px;align-items:center;border-bottom:1px solid #a8a8a8;border-top:.5px solid #d5d5d5}
.vr .no{height:9px;justify-content:space-evenly;font-size:6px}
.vr .btn.tl{height:9px;font-size:5.4px}
.vr .scope{width:15.5px;height:9.5px}
.vr .off{background:#000;color:#e2e2e2;font-size:7px;line-height:9.5px;text-align:center}
.vr .inp{height:8px;font-size:5.4px;color:#111;padding-left:.5px}
.vr x-k{--k:10.5px}
.vr x-s{height:8px;background-size:100% 1.5px}
.vr x-s i{width:5px}
.vr x-s i::after{left:1.3px;width:1.4px}
.vr.d .btn.tl,.vr.d x-s,.vr.d x-k,.vr.d .inp,.vr.d>.chk{opacity:.4}
.vr .vib{opacity:.4}
.vfoot{display:flex;padding:4px 0 0 278px}.vfoot .btn{width:30px;height:10px;font-size:6px}

/* vectors */
.vect{font-size:5.6px;color:#222}
.vc0{display:grid;grid-template-columns:44px 18px 54px 35px;gap:1px;padding:5px 0 0 12px;height:19px;align-items:start;font-size:5.8px;line-height:9px}
.vc0 .btn{grid-column:4;height:9.5px;font-size:5.7px}.vc0 small{font-size:4px}
.vc0 .spin{height:9px}
.vbox{background:#86b1c6;border:1px solid #6d9cb4;border-bottom-color:#a7d2e6;margin:0 3px 3.5px;height:49px;display:grid;grid-template-columns:77px 72px;column-gap:14px;padding:4px 0 0 4.5px;grid-template-rows:11px 18px 9px;align-items:start}
.vect .nm{height:9.5px;border:1px solid #d0d0d0;border-right-color:#555;border-bottom-color:#555;background:linear-gradient(90deg,#dfaec0 34%,#bebebe 34%);text-align:center;line-height:7.5px}
.fs{display:flex;align-items:center;gap:2px}.fs .sel{width:27px;height:9px}.fs .sel::after{width:7px}.fs i{flex:1}
.cn{display:flex;align-items:center;padding-left:9px;gap:2px;height:18px;width:90px}.cn .spin{width:24px;height:9px}.xy{font-size:7.6px;margin-left:9px}
.ft{font-size:6.6px;line-height:18px;padding-left:17px}
.vcf{display:grid;grid-template-columns:96px 28px;justify-content:space-between;padding:1px 3px 0 20px;text-align:center}
.vcf b{border:1px solid #888;border-right-color:#ddd;border-bottom-color:#ddd;height:10px;line-height:8px}
.vcf .btn{height:10px}

/* bank */
.bk0{display:grid;grid-template-columns:94px 13px 45px 19px 45px 19px 45px 8px 1fr;height:14px;padding:2px 1px 0 2px;align-items:start;font-size:5.3px}
.bk0>:nth-child(2){grid-column:3}.bk0>:nth-child(3){grid-column:5}.bk0>:nth-child(4){grid-column:7}.bk0>:nth-child(5){grid-column:9;text-align:center;line-height:6.7px;font-size:5.5px;margin-top:-1px;color:#333}
.bk0 .btn{height:12px}.bk0 .sel{height:9px;margin-top:2px;font-size:5.5px}.bk0 .sel::after{width:7px}
x-bank{display:grid;grid-template-columns:72.5px 73px 72.5px 73px 73px;column-gap:1.2px;padding-left:1.5px;height:239.5px}
.bcol{display:grid;grid-auto-rows:7.44px}
.bcol div{font-size:5.9px;line-height:7px;padding-left:1.5px;overflow:hidden;background:#c4c4c4;border-bottom:1px solid #858585;border-right:1px solid #888;border-top:.4px solid #ddd;color:#222;white-space:pre}
.bcol.e div{background:#a6a6a6}
.bkf{display:grid;grid-template-columns:220px 74px 34px;height:21px;padding-left:1px}
.bkb{display:grid;grid-template-columns:repeat(5,41px);gap:2.2px;border:1px solid #a2a2a2;padding:2px;height:19px;margin-right:2px}
.bkb .btn{height:12px;font-family:"DejaVu Serif",serif;font-size:5.2px}
.bkb .sel1{height:14px;border-bottom:2px solid #0ae020}
.bke{border:1px solid #999;margin:0 1px;text-align:center;font-size:5.4px;padding:2px 2px 0;height:19px}
.bke div{display:grid;grid-template-columns:1fr 1fr 1fr;line-height:7px;margin-top:1px}
.bke i:nth-child(1){background:#dfaec0}.bke i:nth-child(2){background:#aac8dc}.bke i:nth-child(3){background:#c8dba6}
.bkf>.btn{margin:5px 0 0 22px;width:34px;height:12px;font-size:5.6px}

/* oscillator */
.osc{font-size:4.8px}
.os1{display:grid;grid-template-columns:171px 171px;gap:1px;padding:2px 0 0 2px;height:143px}
.osp{border:1px solid #999;border-left-color:#ddd;text-align:center;padding:3px 1.5px 0}
.osp>b{display:block;font-size:5.4px;height:9px}
x-spec svg,x-osc svg{display:block;width:167px}
x-spec svg{height:23px;margin-bottom:3px}
x-osc svg{height:88.5px}
.oc1,.oc2{display:flex;align-items:center;gap:2px;height:14px;--k:8px}
.oc1>span:first-child{font-size:5.2px}
.oc1>.sel{width:29px;height:8px;font-size:5.2px}.ph{width:46px;font-size:4.6px}.phr{display:grid;grid-template-columns:17px 28px;gap:1px}.phr .inp{height:6px}.phr x-s{height:5px}
.ob{display:flex;align-items:center;gap:1.5px;border:1px solid #a5a5a5;height:11px;padding:0 1px;--k:8.5px;flex:1;justify-content:space-around;font-size:4.4px}
.ob .sel{width:22px;height:7px;flex:none}.ob .hot{background:#1e1e96;color:#fff}
.ob .inp{width:12px;height:6px}.oc2 .inp{width:12px;height:6px}
.bf{width:43px;text-align:left}.bf .sel{width:42px;height:6.5px}
.oc2>x-k{--k:10px}
.os2{display:flex;align-items:center;gap:1px;height:17px;padding:0 2px;width:348px}
.os2>.btn{width:40px;height:9px;font-size:5.2px;flex:none;margin-right:2px}.os2>.btn+.btn{width:17px;margin-right:0}
.os2 .ob{height:13px;font-size:4.8px;flex:1 1 auto}
.yl{width:1.5px;height:4px;background:#dd2;margin-right:2px}
.os3{display:grid;grid-template-columns:315px 28px;gap:3px;padding-left:1.5px}
.os3 x-harm{height:118px}
.osr{display:flex;flex-direction:column;gap:1.5px;text-align:center}
.hs,.ah{display:flex;flex-direction:column;gap:1px;border:1px solid #a8a8a8;--k:12px}
.hs{height:31px;margin-top:-2px}.ah{height:42px;margin-top:1px;font-size:4.5px}.ah .sel{width:26px;height:6.5px;font-size:5px}
.ah x-s{height:5px}
.osr .btn{height:8px;font-size:5.2px;flex:none}
.cpr{display:flex;justify-content:space-between}.cpr .cp{width:12px;height:7px}
.osr .cl{height:11px;font-size:6px}
```
FILE: script.js
```js
const NS = 'xmlns="http://www.w3.org/2000/svg"';
const pt = (a, r) => { const t = (a - 90) * Math.PI / 180; return (10 + r * Math.cos(t)).toFixed(2) + ' ' + (10 + r * Math.sin(t)).toFixed(2); };
const arc = (a, b, r) => `M${pt(a, r)}A${r} ${r} 0 ${b - a > 180 ? 1 : 0} 1 ${pt(b, r)}`;

// Rotary knobs: dark ring, cyan value arc, light cap and a pointer
function knob(el) {
  const a = +el.getAttribute('a') || 0;
  const red = el.getAttribute('p') === 'r';
  const end = el.hasAttribute('full') ? 145 : a;
  const val = end > -140 ? `<path d="${arc(-145, end, 8.6)}" fill="none" stroke="#2fa9d0" stroke-width="2.2"/>` : '';
  const svg = `<svg ${NS} viewBox="0 0 20 20"><circle cx="10" cy="10" r="8.6" fill="#b9bfc4"/><path d="${arc(-145, 145, 8.6)}" fill="none" stroke="#3c4246" stroke-width="2.2"/>${val}<circle cx="10" cy="10" r="6.9" fill="#d9dfe4" stroke="#9aa0a4" stroke-width=".6"/><circle cx="9" cy="8.6" r="4" fill="#eef2f5"/><path d="M${pt(a, 1)}L${pt(a, 5.6)}" stroke="${red ? '#e02020' : '#333'}" stroke-width="1.4"/></svg>`;
  const t = el.getAttribute('t');
  const lab = t ? `<span>${t}</span>` : '';
  el.innerHTML = el.hasAttribute('up') ? lab + svg : svg + lab;
}
function slider(el) { el.innerHTML = `<i style="left:${el.getAttribute('v')}%"></i>`; }

// Harmonic magnitude and phase sliders
document.querySelectorAll('x-harm').forEach(el => {
  const n = +el.getAttribute('n'), sub = el.hasAttribute('sub');
  const p = sub ? 9.63 : 9.34, x0 = sub ? 7 : 4;
  const top = sub ? [2, 67, 74.5, 84, 148, 116.5] : [1, 61, 65.5, 70, 110, 90.5];
  const vals = sub ? [9, 26, 45.5, 60, 64, 64, 64, 49.5] : [4.5];
  let s = '';
  for (let i = 0; i < n; i++) {
    const x = x0 + i * p, y = vals[i] ?? (sub ? 64 : 32);
    const red = sub && (i < 4 || i === 7);
    const h = (yy, c) => `<rect x="${x - 3}" y="${yy - 2.2}" width="6" height="4.6" fill="#cfcfcf" stroke="#777" stroke-width=".5"/><rect x="${x - 2}" y="${yy - .6}" width="4" height="1.3" fill="${c}"/>`;
    s += `<path d="M${x} ${top[0]}V${top[1]}M${x} ${top[3]}V${top[4]}" stroke="#1a1a1a" stroke-width="1.3"/><path d="M${x + 1.1} ${top[0]}V${top[1]}M${x + 1.1} ${top[3]}V${top[4]}" stroke="#ddd" stroke-width=".5"/>`;
    if (!sub && i) s += `<path d="M${x - 4.6} 32h9" stroke="#333"/>`;
    s += `<path d="M${x - 4.6} ${top[5]}h9" stroke="#333"/>`;
    s += h(y, red ? '#c33' : '#1a1') + h(top[5], '#1a1') + `<text x="${x + (sub ? 0 : -2 + i / 17)}" y="${top[2] + 2}">${i + 1}</text>`;
  }
  const H = sub ? 151 : 111;
  el.innerHTML = `<svg ${NS} width="345" height="${H}">${s}</svg><div class="hsb"><i>◂</i><u></u><i>▸</i></div>`;
});

// Mixer channel strips
const strips = [['1', 'Thin Pipe', 'a', 34, 69, 67], ['2', 'Metal\nDrips', 'a', 50, 0, 0], ['3', 'Pan Pipe\n32', 'as', 22, 71, 56], ['4', 'Soft Choir', 's', 22, 65, 63], ['5', 'Analogue\nBass', 'a', 22, 0, 0], ['6', 'Simple\nSound', 'a', 22, 0, 0], ['7', 'Simple\nSound', 'a', 22, 0, 0]];
const strip = (s, on, cls) => `<div class="ch ${cls}"><div class="ct"><i class="chk ${on ? 'on' : ''}"></i>${s[0]}</div><div class="nm ${s[2]}">${s[1]}</div><div class="mt"><div class="fd"><i style="top:${s[3]}%"></i></div><div class="br"><i style="height:${s[4]}%"></i></div><div class="br"><i style="height:${s[5]}%"></i></div></div><x-k a="${s[0] === '2' ? 20 : s[0] === '1' ? -20 : 0}"></x-k><span class="sel">Ch${s[0]}</span><span class="sel">Main</span><span class="btn">Edit</span></div>`;
document.querySelector('x-mixer').innerHTML = strips.map((s, i) => strip(s, i < 5, i === 1 ? 'act' : i > 4 ? 'offc' : '')).join('') + '<span></span>' +
  [9, 10, 11, 12, 13, 14, 15].map(n => strip([n, 'Simple\nSound', 'a', 45, 0, 0], false, 'offc')).join('');

// Voice rows
const vols = [76, 76, 74, 76, 76, 76, 76, 76], det = ['-0.83', '4.13', '-3.22'], dv = [49, 56, 46];
document.querySelector('x-voices').innerHTML = [0, 1, 2, 3, 4, 5, 6, 7].map(i => {
  const on = i < 3;
  const w = i < 2 ? '<path class="green thin" d="M0 24L8 16L18 11L24 14L30 9L38 14L44 20"/>' : i === 2 ? '<path class="green thin" d="M0 15Q2 26 12 26Q21 26 22 15Q23 4 34 4Q44 4 46 10"/>' : '<path class="wave thin" d="M0 14Q10 28 16 24L30 6Q38 0 46 14"/>';
  return `<div class="vr ${on ? '' : 'd'}"><span class="btn no"><em>${i + 1}</em><i class="chk ${on ? 'on' : ''}"></i></span><b class="btn tl">Edit</b><svg ${NS} class="scope" viewBox="0 0 46 28">${w}</svg><span class="off">OFF</span><x-s v="${vols[i]}" ${i === 2 ? 'c="red"' : ''}></x-s><x-k a="${i === 0 ? 90 : i === 1 ? -90 : 0}" ${on ? 'p="r" full' : ''}></x-k><i class="chk on"></i><span class="inp">${det[i] || '0.00'}</span><x-s v="${dv[i] || 50}" c="${on ? 'red' : 'green'}"></x-s><x-s class="vib" v="34" c="green"></x-s></div>`;
}).join('');

// Instrument bank: name | engines used (a = add, s = sub, p = pad)
const names = `Xylophone|a,Vibraphone|p,Soft Vibes|p,Simple Chimes|a,Silver Bell|a,Soft Hammer|a,Ethereal|a,Metal Drips|a,Trem Lead|a,Trem Synth Piano 3|p,Trem Synth|a,Simple Square|a,Full Square|a,Super Square|a,Steel Wire|as,Echo Bubbles|a,Fantasia|p,Sub Delay|as,Soft|a,Ultra Soft|a,Whistle|a,Wipe Whistle|a,Ghost Whistle|as,Full Strings|p,Slow Strings|p,Pizzicato Strings|a,Sweep Synth|a,Warm Synth|p,Hard Synth|as,Bright Synth|a,Multi Synth|asp,Slow Saw|p,Medium Saw|a,Hard Saw|a,Voiced Saw|as,Sweep Saw|p,Stereo Sweep Saw|a,Wipe Synth|a,Hard Stereo Sweep|a,Master Synth Low|asp,Master Synth High|asp,Sharp Synth|p,Fretless Bass|a,Decay Bass|a,Steel Bass|ap,Synth Bass|ap,Distorted Bass|a,Variable Reed|a,Reed Organ|a,Soft Organ|a,Thin Pipe|a,Great Organ|a,64ft Organ|a,Hammond Organ|a,Percussion Organ|a,Sines|a,Soft Flute|a,Warm Flute|as,Ocarina|a,Beyond|as,Sweep Pad|a,Sweep Matrix|a,Matrix|a,Slow Deep Matrix|as,Ice Field|as,Hollow Ice Field|as,Smooth|s,Rushes|s,Medium Rushes|sp,Bright Rushes|sp,Bright Rush Long T|sp,Extended Rushes|asp,Bright Rush Pipe|asp,Sweep Rushes|s,Breathy Pad|p,ReedBank|s,Voyager|s,Soft Voyager|s,Soft Voyager Rever|s,Echo Choir|as,Sharp|as,Sharp and Warm|as,Sharp and Deep|as,Sharp Reed|a,Far Reed|a,Clarinet|a,Bassoon|a,Aooww|a,Daooww|a,Yaooww|a,Yiee|a,Eeoow|p,Overdrive|a,Overdrive 2|a,Overdrive 3|a,Power Guitar 1|a,Power Guitar 2|a,Wet Brass|a,Wet Brass 2|a,Prophesy|a,Bottle|s,Pan Pipe 32|as,Pan Pipe|as,Pan Pipe 96|as,Lite Guitar|a,Trem Guitar|a,Smooth Guitar|a,Nylon Guitar|a,Tunnel Piano|a,Home Piano|p,Moonlight Piano|p,Soft Piano1|a,Soft Piano2|as,Space Piano|sp,Space Voice|s,Far Space Voice|s,Space Voice 2|as,Soft Choir|s,Full Choir|sp,Soft Ahh|p,Breathy Ahh|p,Another Choir|ap,Light Choir|p,Super Pad|a,Hyper Pad|a,Hyper Matrix|as,Extreme|as,Wind and Surf|a`.split(',');
const G = '#c4c4c4';
const fill = e => `linear-gradient(90deg,${e.includes('a') ? '#dfaec0' : G} 32%,${e.includes('s') ? '#aeccdd' : G} 32% 67%,${e.includes('p') ? '#c8dba6' : G} 67%)`;
let bank = '';
for (let c = 0; c < 4; c++) {
  bank += '<div class="bcol">';
  for (let r = 0; r < 32; r++) {
    const [n, e] = names[c * 32 + r].split('|');
    bank += `<div style="background:${fill(e)}">${c * 32 + r + 1}. ${n}</div>`;
  }
  bank += '</div>';
}
document.querySelector('x-bank').innerHTML = bank + '<div class="bcol e">' + '<div></div>'.repeat(32) + '</div>';

// Oscillator scope and spectrum
document.querySelectorAll('x-osc').forEach(el => {
  let g = '';
  for (let i = 1; i < 16; i++) g += `M${i * 31.3} 0V267`;
  for (let i = 1; i < 8; i++) g += `M0 ${i * 33.4}H501`;
  el.innerHTML = `<svg ${NS} class="scope" viewBox="0 0 501 267" preserveAspectRatio="none"><path class="grid" d="${g}M0 133H501"/><path class="green" d="M2 132C10 245 25 259 125 261C220 260 240 245 253 133C262 35 280 6 370 5C465 6 488 20 500 95"/></svg>`;
});
document.querySelectorAll('x-spec').forEach(el => {
  let s = '';
  for (let i = 0; i < 7; i++) s += `<path d="M0 ${8 + i * 9}H501" stroke="#2340c8" stroke-width="2"/>`;
  for (let i = 0; i < 18; i++) s += `<path d="M${4 + i * 6} 70V${70 - 66 * Math.pow(1 - i / 18, 1.5)}" stroke="#0c7a3c" stroke-width="2.4"/>`;
  el.innerHTML = `<svg ${NS} viewBox="0 0 501 70" preserveAspectRatio="none"><rect width="501" height="70" fill="#10229a"/>${s}</svg>`;
});

// Piano keys
{
  const w = 281 / 42; let s = '<rect width="281" height="38.4" fill="#fbeee4" stroke="#444"/>';
  for (let i = 1; i < 42; i++) s += `<path d="M${i * w} 0V38" stroke="#777" stroke-width=".8"/>`;
  for (let i = 0; i < 42; i++) if (![2, 6].includes(i % 7)) s += `<rect x="${(i + 1) * w - 2.4}" y="0" width="4.5" height="22.5" fill="#000"/>`;
  document.querySelector('x-piano').innerHTML = `<svg ${NS} width="282" height="38.6">${s}</svg>`;
}

// Spectrum bars of the pad editor
document.querySelector('x-bars').innerHTML = [98, 88, 75, 88, 88, 88, 86, 84, 82, 75, 70, 66, 68, 72, 74, 72, 70, 65, 60, 58, 72, 66, 58, 56, 58, 52, 50, 62, 56, 52, 50, 56, 60, 50, 46, 58, 52, 62, 46, 42, 40, 46, 52, 50, 56, 42, 38, 44, 56, 58, 54, 52, 46, 42, 48, 56, 50, 44, 42, 48, 54].map(v => `<i style="height:${v}%"></i>`).join('');

document.querySelectorAll('x-k').forEach(knob);
document.querySelectorAll('x-s').forEach(slider);
```
